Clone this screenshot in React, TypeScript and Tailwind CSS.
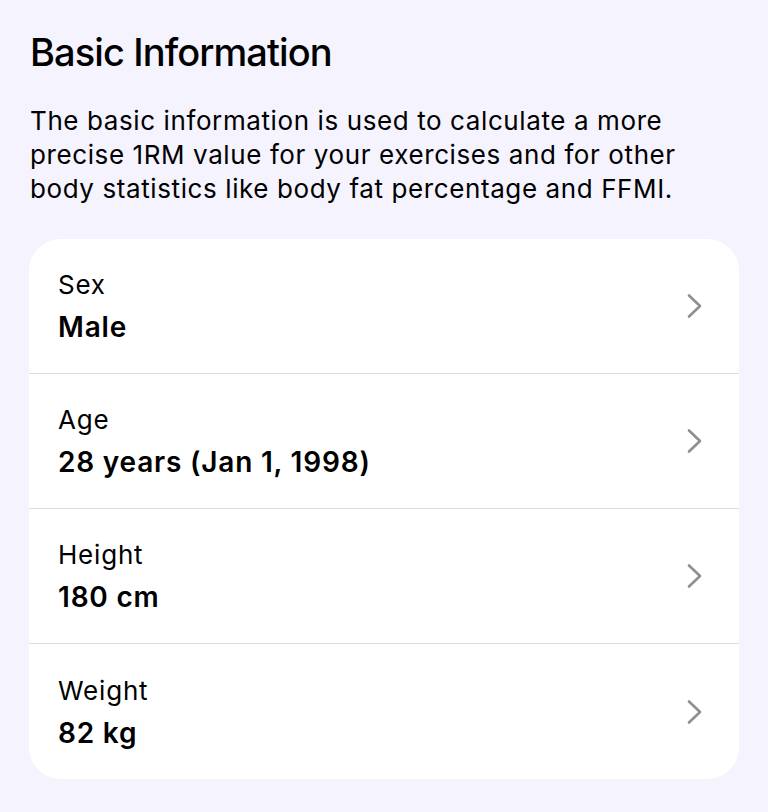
const rows = [
  { label: "Sex", value: "Male" },
  { label: "Age", value: "28 years (Jan 1, 1998)" },
  { label: "Height", value: "180 cm" },
  { label: "Weight", value: "82 kg" },
];

function Chevron() {
  return (
    <svg width="18" height="26" viewBox="0 0 18 26" fill="none" className="shrink-0">
      <path d="M3 2.5 L14 13 L3 23.5" stroke="#8e8e93" strokeWidth="2.6" strokeLinecap="round" strokeLinejoin="round" />
    </svg>
  );
}

export default function App() {
  return (
    <div
      className="min-h-[812px] bg-[#f5f3fe] pl-[30px] pr-[29px] pt-[28px] text-black"
      style={{ fontFamily: "Inter, 'Noto Sans', sans-serif" }}
    >
      <h1 className="text-[38px] leading-[48px] font-medium tracking-[-0.9px]">Basic Information</h1>
      <p className="mt-[28px] text-[26px] leading-[34px] tracking-[0.6px]">
        The basic information is used to calculate a more precise 1RM value for your exercises and for other
        body statistics like body fat percentage and FFMI.
      </p>
      <div className="mt-[33px] -ml-px rounded-[32px] bg-white">
        {rows.map((row, i) => (
          <div
            key={row.label}
            className={`flex h-[135px] items-center pl-[29px] pr-[35px] ${i < rows.length - 1 ? "border-b border-[#dcdce0]" : ""}`}
          >
            <div className="flex-1">
              <div className="text-[26px] leading-[34px] tracking-[0.8px]">{row.label}</div>
              <div className="mt-[8px] text-[28px] leading-[34px] font-semibold tracking-[0.8px]">{row.value}</div>
            </div>
            <Chevron />
          </div>
        ))}
      </div>
    </div>
  );
}
